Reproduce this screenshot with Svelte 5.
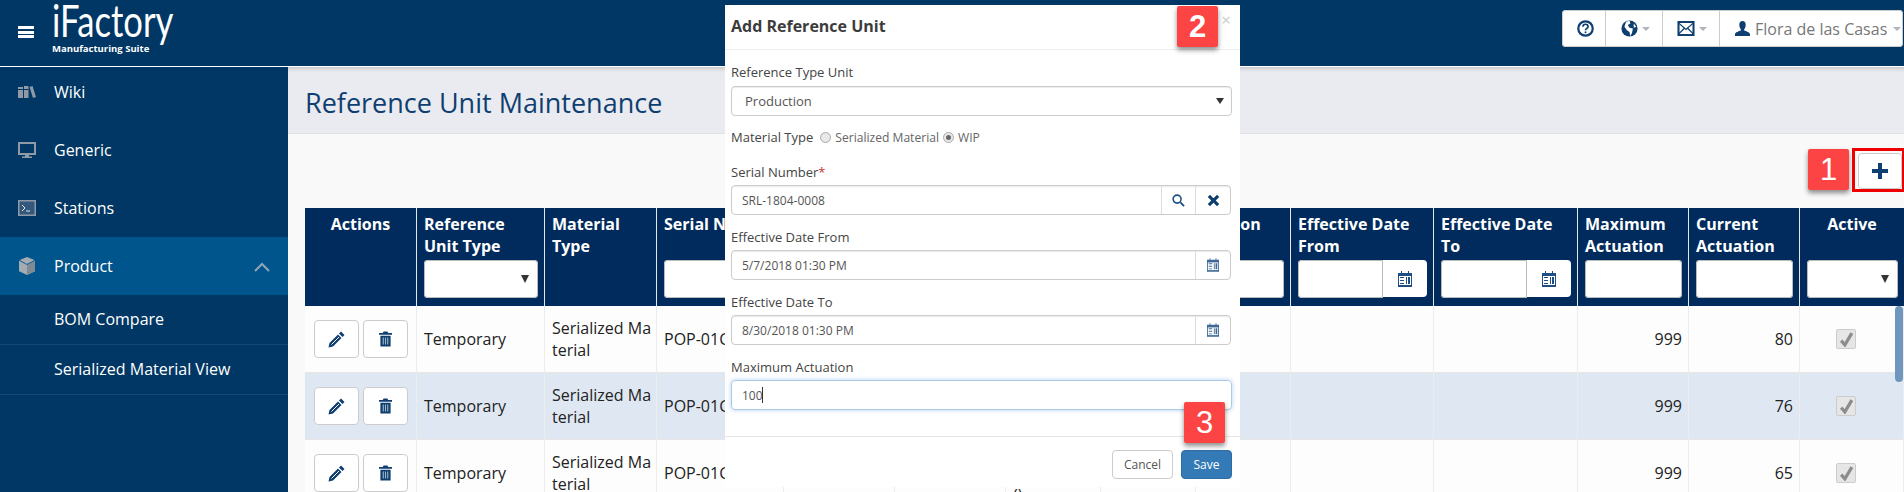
<script>
  const navItems = [
    { label: "Wiki", icon: "books" },
    { label: "Generic", icon: "monitor" },
    { label: "Stations", icon: "terminal" },
    { label: "Product", icon: "cube", active: true }
  ];
  const subItems = ["BOM Compare", "Serialized Material View"];
  const rows = [
    { current: 80 },
    { current: 76, alt: true },
    { current: 65, note: true }
  ];
</script>

{#snippet calendar()}
  <svg class="cal" viewBox="0 0 14 16">
    <path fill="#1d4f85" d="M0 2h3V0h1v2h6V0h1v2h3v14H0z" />
    <path fill="#fff" d="M1 5h12v9H1z" />
    <path fill="#1d4f85" d="M2 6h4v1H2zM2 9h4v1H2zM2 12h4v1H2zM8 6h1v7H8zM10 6h2v7h-2z" />
  </svg>
{/snippet}

{#snippet caret()}
  <span class="caret"></span>
{/snippet}

<div class="page">
  <header class="topbar">
    <div class="brand">
      <div class="burger"><i></i><i></i><i></i></div>
      <div class="logo">
        <span class="logo-name">iFactory</span>
        <span class="logo-sub">Manufacturing Suite</span>
      </div>
    </div>
    <div class="tools">
      <button class="tool help" aria-label="Help">
        <svg viewBox="0 0 20 20" width="17" height="17"><circle cx="10" cy="10" r="8.5" fill="none" stroke="#0f3f70" stroke-width="2.600" /><path d="M7 8c0-4 6-4 6 0 0 2-3 2-3 4" fill="none" stroke="#0f3f70" stroke-width="2" /><rect x="9" y="13.500" width="2" height="2" fill="#0f3f70" /></svg>
      </button>
      <button class="tool globe" aria-label="Language">
        <svg viewBox="0 0 20 20" width="17" height="17"><circle cx="10" cy="10" r="9.500" fill="#0f3f70" /><path fill="#fff" d="M6 2l4-1 1 3-3 2 2 3 4 1-1 5-2 4-1-5-3-2-3-4zM15 4l3 4-3 1z" /></svg>
        {@render caret()}
      </button>
      <button class="tool mail" aria-label="Messages">
        <svg viewBox="0 0 18 16" width="18" height="15"><rect x="1" y="1" width="16" height="14" fill="#fff" stroke="#0f3f70" stroke-width="2.200" /><path d="M1 2l8 7 8-7M1 14l6-6M17 14l-6-6" fill="none" stroke="#0f3f70" stroke-width="1.400" /></svg>
        {@render caret()}
      </button>
      <button class="tool user">
        <svg viewBox="0 0 16 16" width="15" height="15"><path fill="#0f3f70" d="M8 0c2.400 0 3.600 2 3.400 4.400C11.200 6.600 10.400 8 9.800 8.600v1.400c2 .8 6.200 1.800 6.200 4V16H0v-2c0-2.200 4.200-3.200 6.200-4V8.600C5.600 8 4.800 6.600 4.600 4.400 4.400 2 5.600 0 8 0z" /></svg>
        <span>Flora de las Casas</span>
        {@render caret()}
      </button>
    </div>
  </header>

  <div class="body">
    <nav class="sidebar">
      {#each navItems as item}
        <div class="nav-item" class:active={item.active}>
          <span class="nav-icon">
            {#if item.icon === "books"}
              <svg viewBox="0 0 18 12" width="18" height="12"><path fill="#8f9aa6" d="M0 1h5v11H0zM6 0h4.500v12H6zM11.500 1l3-1 3.500 11-3 1z" /><path fill="#003764" d="M0 3h5v1H0zM6 3h4.500v1H6z" /></svg>
            {:else if item.icon === "monitor"}
              <svg viewBox="0 0 18 16" width="18" height="16"><path fill="#8f9aa6" d="M0 0h18v13h-7v1.500h3V16H4v-1.500h3V13H0zM2 2v9h14V2z" /></svg>
            {:else if item.icon === "terminal"}
              <svg viewBox="0 0 18 16" width="18" height="16"><rect width="18" height="16" fill="#8f9aa6" /><rect x="1.500" y="1.500" width="15" height="13" fill="#33587c" /><path d="M4 5l3 3-3 3M8 11h4" fill="none" stroke="#e4e8ec" stroke-width="1" /></svg>
            {:else}
              <svg viewBox="0 0 18 18" width="18" height="18"><path fill="#a3abb3" d="M9 0l8 3.200v11L9 18l-8-3.800v-11z" /><path fill="#7f8a94" d="M9 7.500V18l8-3.800v-11z" /><path fill="none" stroke="#00558c" stroke-width=".9" d="M1 3.200l8 4.300 8-4.300" /></svg>
            {/if}
          </span>
          <span>{item.label}</span>
          {#if item.active}
            <svg class="chev" viewBox="0 0 16 10" width="16" height="10"><path d="M1 9l7-7 7 7" fill="none" stroke="#8fa5b8" stroke-width="2" /></svg>
          {/if}
        </div>
      {/each}
      {#each subItems as sub}
        <div class="sub-item">{sub}</div>
      {/each}
    </nav>

    <main class="content">
      <div class="title-band"><h1>Reference Unit Maintenance</h1></div>
      <div class="toolbar">
        <span class="badge">1</span>
        <div class="add-box">
          <button class="add" aria-label="Add">
            <svg viewBox="0 0 16 16" width="16" height="16"><path fill="#0f3f70" d="M6 0h4v6h6v4h-6v6H6v-6H0V6h6z" /></svg>
          </button>
        </div>
      </div>
      <div class="grid">
        <div class="row head">
          <div class="th center">Actions</div>
          <div class="th"><span>Reference Unit Type</span><div class="filter sel"></div></div>
          <div class="th"><span>Material Type</span></div>
          <div class="th"><span class="nowrap">Serial Number</span><div class="filter"></div></div>
          <div class="th"></div><div class="th"></div><div class="th"></div><div class="th"></div>
          <div class="th"><span class="nowrap">Station</span><div class="filter"></div></div>
          <div class="th"><span>Effective Date From</span><div class="filter date"><b></b><em>{@render calendar()}</em></div></div>
          <div class="th"><span>Effective Date To</span><div class="filter date"><b></b><em>{@render calendar()}</em></div></div>
          <div class="th"><span>Maximum Actuation</span><div class="filter"></div></div>
          <div class="th"><span>Current Actuation</span><div class="filter"></div></div>
          <div class="th center"><span>Active</span><div class="filter sel"></div></div>
        </div>
        {#each rows as row}
          <div class="row data" class:alt={row.alt}>
            <div class="td acts">
              <button class="act" aria-label="Edit">
                <svg viewBox="0 0 17 17" width="17" height="17"><path fill="#0f3f70" d="M13 .5L16.500 4l-2 2L11 2.500zM10 3.500L13.500 7l-8.500 8.500L.5 16.500 1.500 12z" /><path stroke="#fff" stroke-width="1" d="M3.500 13.500l7.500-7.500" /></svg>
              </button>
              <button class="act" aria-label="Delete">
                <svg viewBox="0 0 14 16" width="13" height="16"><path fill="#0f3f70" d="M5 0h4l1 1.500h4v2H0v-2h4zM1.500 4.500h11V16h-11z" /><path fill="#9fb4c9" d="M4 6.500h1.200V14H4zM6.400 6.500h1.200V14H6.400zM8.800 6.500H10V14H8.800z" /></svg>
              </button>
            </div>
            <div class="td">Temporary</div>
            <div class="td wrap">Serialized Material</div>
            <div class="td">POP-01C-0008</div>
            <div class="td"></div><div class="td"></div>
            <div class="td">{#if row.note}<br /><br />(){/if}</div>
            <div class="td"></div><div class="td"></div><div class="td"></div><div class="td"></div>
            <div class="td num">999</div>
            <div class="td num">{row.current}</div>
            <div class="td check"><span class="tick"><svg viewBox="0 0 14 14" width="15" height="15"><path d="M2 8l3.500 4L12 1" fill="none" stroke="#8c8c8c" stroke-width="3" /></svg></span></div>
          </div>
        {/each}
        <div class="thumb"></div>
      </div>
    </main>
  </div>

  <div class="modal">
    <div class="modal-head">
      <span>Add Reference Unit</span>
      <span class="close">×</span>
      <span class="badge">2</span>
    </div>
    <div class="modal-body">
      <label for="unit">Reference Type Unit</label>
      <div class="control select" id="unit"><span>Production</span><i></i></div>
      <div class="radios">
        <span class="lbl">Material Type</span>
        <span class="radio"></span><span>Serialized Material</span>
        <span class="radio on"></span><span>WIP</span>
      </div>
      <label for="serial">Serial Number<sup>*</sup></label>
      <div class="control group" id="serial">
        <span class="val">SRL-1804-0008</span>
        <em class="addon"><svg viewBox="0 0 14 14" width="13" height="13"><circle cx="5.500" cy="5.500" r="4.300" fill="none" stroke="#1d4f85" stroke-width="1.700" /><path d="M9 9l4 4" stroke="#1d4f85" stroke-width="2" /></svg></em>
        <em class="addon wide"><svg viewBox="0 0 14 14" width="13" height="13"><path d="M2 2l10 10M12 2L2 12" stroke="#0f3f70" stroke-width="3.400" /></svg></em>
      </div>
      <label for="from">Effective Date From</label>
      <div class="control group" id="from"><span class="val">5/7/2018 01:30 PM</span><em class="addon wide">{@render calendar()}</em></div>
      <label for="to">Effective Date To</label>
      <div class="control group" id="to"><span class="val">8/30/2018 01:30 PM</span><em class="addon wide">{@render calendar()}</em></div>
      <label for="max">Maximum Actuation</label>
      <div class="control focus" id="max"><span class="val">100</span><u></u></div>
    </div>
    <div class="modal-foot">
      <span class="badge">3</span>
      <button class="cancel">Cancel</button>
      <button class="save">Save</button>
    </div>
  </div>
</div>

<style>
  :global(body) { margin: 0; background: #f9f9f9; }
  .page { position: relative; width: 1904px; height: 492px; overflow: hidden; font-family: "Open Sans", sans-serif; font-size: 16px; color: #333; }
  button { font-family: inherit; padding: 0; }

  .topbar { height: 56px; padding-top: 10px; border-bottom: 1px solid #fff; background: #003764; display: flex; justify-content: space-between; }
  .brand { display: flex; align-items: flex-start; }
  .burger { display: flex; flex-direction: column; gap: 1.500px; margin: 16px 0 0 18px; width: 16px; }
  .burger i { height: 3px; background: #fff; }
  .logo { display: flex; flex-direction: column; margin: -10px 0 0 18px; color: #fff; }
  .logo-name { font-family: "Lato", sans-serif; font-weight: 400; font-size: 45px; line-height: 40px; transform: scaleX(.77); transform-origin: left; white-space: nowrap; }
  .logo-sub { font-size: 9.500px; font-weight: 700; line-height: 10px; margin-top: 4px; white-space: nowrap; }
  .tools { display: flex; height: 37px; margin-right: 1px; background: #fff; border-radius: 4px; box-shadow: inset 0 0 0 1px #ccc; }
  .tool { display: flex; align-items: center; gap: 3px; background: none; border: 0; border-right: 1px solid #ccc; color: #777; font-size: 16px; }
  .tool:last-child { border: 0; }
  .help { width: 44px; padding-left: 15px; box-sizing: border-box; }
  .globe { width: 57px; padding-left: 15px; box-sizing: border-box; }
  .mail { width: 57px; padding-left: 14px; box-sizing: border-box; }
  .user { width: 183px; padding-left: 15px; gap: 5px; box-sizing: border-box; }
  .caret { width: 0; height: 0; border: 4.500px solid transparent; border-top-color: #b0b5bb; border-bottom: 0; margin-left: 1px; }

  .body { display: flex; height: 425px; }
  .sidebar { width: 288px; flex: none; background: #003764; color: #fff; font-size: 16px; }
  .nav-item { display: flex; align-items: center; height: 58px; padding-left: 18px; position: relative; }
  .nav-item:first-child { height: 50px; padding-bottom: 4px; }
  .nav-item.active { background: #00558c; }
  .nav-icon { width: 36px; display: flex; }
  .chev { position: absolute; right: 18px; top: 25px; }
  .sub-item { height: 47px; padding: 0 0 2px 54px; display: flex; align-items: center; border-bottom: 1px solid #12497a; font-size: 16px; }

  .content { flex: 1; min-width: 0; }
  .title-band { height: 62px; padding: 4px 0 0 17px; background: #e9ebf0; border-bottom: 1px solid #e0e2e6; display: flex; align-items: center; box-shadow: inset 0 6px 5px -5px #bbb; }
  h1 { margin: 0; font-size: 27px; font-weight: 400; color: #0f3f70; }
  .toolbar { height: 74px; display: flex; justify-content: flex-end; align-items: flex-start; }
  .badge { width: 41px; height: 41px; background: #fd4444; color: #fff; border-radius: 2px; font-family: "Liberation Sans", sans-serif; font-size: 31px; display: flex; align-items: center; justify-content: center; box-shadow: 0 3px 5px rgba(0,0,0,.45); }
  .toolbar .badge { margin: 15px 3px 0 0; }
  .add-box { width: 44px; height: 36px; border: 3px solid #e00; border-right-width: 2px; margin-top: 14px; padding: 2px 0 0 3px; }
  .add { width: 44px; height: 36px; background: #fff; border: 1px solid #ccc; border-radius: 4px; display: flex; align-items: center; justify-content: center; }

  .grid { position: relative; margin: 0 0 0 17px; }
  .row { display: grid; grid-template-columns: 112px 128px 112px 127px 111px 111px 95px 95px 95px 143px 144px 111px 111px 104px; }
  .head { height: 98px; background: #002b5c; color: #fff; font-weight: 700; }
  .th { border-right: 1px solid #e6e6e6; padding: 5px 7px 0; line-height: 22px; position: relative; box-sizing: border-box; }
  .th:last-child { border: 0; }
  .th span { display: block; height: 44px; }
  .nowrap { white-space: nowrap; }
  .center { text-align: center; }
  .filter { position: absolute; left: 7px; right: 6px; top: 52px; height: 38px; background: #fff; border-radius: 4px; box-shadow: inset 0 0 0 1px #bbb; }
  .filter.sel::after { content: ""; position: absolute; right: 9px; top: 15px; border: 4px solid transparent; border-top: 8px solid #333; border-bottom: 0; }
  .filter.date { display: flex; background: none; box-shadow: none; }
  .filter.date b { flex: 1; background: #fff; border-radius: 4px 0 0 4px; box-shadow: inset 0 0 0 1px #bbb; }
  .filter.date em { width: 44px; height: 37px; background: #fff; border-radius: 0 4px 4px 0; display: flex; align-items: center; justify-content: center; }
  .cal { width: 14px; height: 16px; }
  .addon .cal { width: 12px; height: 14px; opacity: .85; }
  .data { height: 67px; background: #fdfdfd; }
  .data.alt { background: #dfe8f2; }
  .td { border-right: 1px solid #ececec; border-bottom: 1px solid #e6e6e6; padding: 0 7px; display: flex; align-items: center; line-height: 22px; box-sizing: border-box; color: #222; overflow: hidden; white-space: nowrap; }
  .wrap { white-space: normal; word-break: break-all; padding-right: 2px; }
  .num { justify-content: flex-end; padding-right: 6px; }
  .check { justify-content: center; padding-right: 18px; }
  .tick { width: 18px; height: 18px; border: 1px solid #ccc; border-radius: 2px; background: #e6e6e6; display: flex; align-items: center; justify-content: center; }
  .acts { gap: 4px; padding: 0 0 0 9px; }
  .act { width: 45px; height: 38px; background: #fff; border: 1px solid #ccc; border-radius: 4px; display: flex; align-items: center; justify-content: center; }
  .thumb { position: absolute; right: 1px; top: 98px; width: 8px; height: 76px; border-radius: 4px; background: #6f97bd; }

  .modal { position: absolute; left: 725px; top: 5px; width: 515px; height: 482px; background: #fff; display: flex; flex-direction: column; font-size: 13px; color: #444; }
  .modal-head { height: 42px; padding: 0 0 2px 6px; flex: none; border-bottom: 1px solid #eee; display: flex; align-items: center; font-size: 16px; font-weight: 700; color: #3c3c3c; position: relative; }
  .close { position: absolute; right: 9px; top: 3px; color: #ccc; font-size: 17px; font-weight: 400; }
  .modal-head .badge { position: absolute; left: 452px; top: 1px; }
  .modal-body { flex: 1; padding: 0 8px 0 6px; }
  label { display: block; font-weight: 500; line-height: 18px; color: #444; }
  label:first-child { margin-top: 13px; }
  sup { color: #c33; font-size: 13px; line-height: 0; vertical-align: baseline; }
  .control { height: 30px; box-sizing: border-box; border: 1px solid #ccc; border-radius: 4px; margin-top: 4px; margin-bottom: 13px; display: flex; align-items: center; font-size: 12px; color: #555; position: relative; box-shadow: inset 0 1px 1px rgba(0,0,0,.08); }
  .select { padding-left: 13px; justify-content: space-between; font-size: 13px; margin-top: 5px; margin-bottom: 12px; }
  .select i { border: 4px solid transparent; border-top: 6px solid #333; border-bottom: 0; margin-right: 7px; }
  .group { margin-right: 1px; }
  .group .val, .focus .val { padding-left: 10px; flex: 1; }
  .addon { width: 33px; height: 100%; border-left: 1px solid #ddd; display: flex; align-items: center; justify-content: center; flex: none; }
  .addon.wide { width: 34px; }
  .focus { border-color: #aecbe6; box-shadow: 0 0 4px rgba(102,160,230,.5); }
  .focus .val { flex: none; }
  .focus u { width: 1px; height: 16px; background: #333; margin-left: -1px; }
  .radios { display: flex; align-items: center; gap: 4px; height: 18px; margin-bottom: 17px; font-size: 12.100px; color: #666; }
  .lbl { font-weight: 500; color: #444; font-size: 13px; margin-right: 3px; }
  .radio { width: 9px; height: 9px; border: 1px solid #aaa; border-radius: 50%; background: #e8e8e8; position: relative; }
  .radio.on::after { content: ""; position: absolute; left: 2px; top: 2px; width: 5px; height: 5px; border-radius: 50%; background: #666; }
  .modal-foot { flex: none; border-top: 1px solid #e5e5e5; display: flex; justify-content: flex-end; gap: 8px; padding: 13px 8px 0 0; box-sizing: border-box; height: 51px; position: relative; }
  .modal-foot .badge { position: absolute; left: 459px; top: -35px; }
  .modal-foot button { height: 29px; border-radius: 4px; font-size: 12px; }
  .cancel { width: 61px; background: #fff; border: 1px solid #ccc; color: #555; }
  .save { width: 51px; background: #337ab7; border: 1px solid #2e6da4; color: #fff; }
</style>
